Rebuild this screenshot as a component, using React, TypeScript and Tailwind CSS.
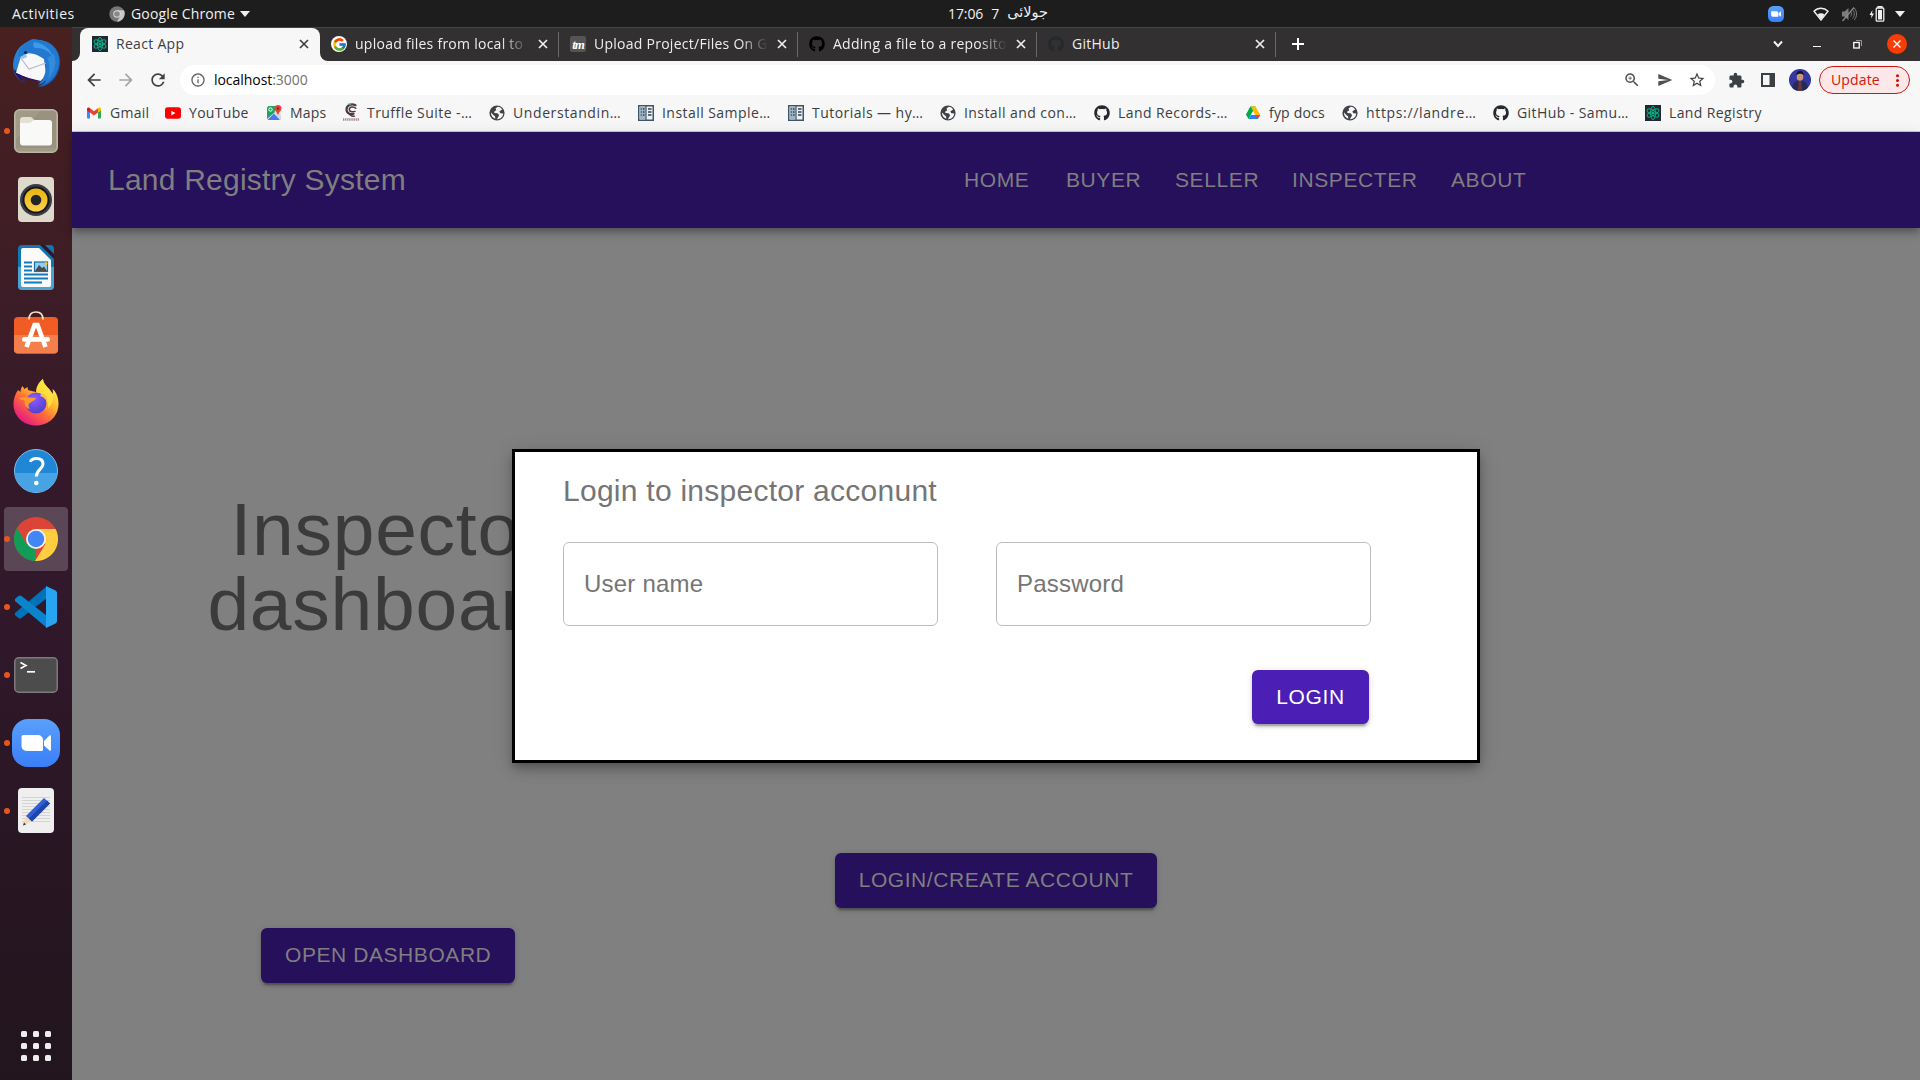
import React from "react";
import { FaGithub } from "react-icons/fa";
import {
  MdArrowBack,
  MdArrowForward,
  MdRefresh,
  MdInfoOutline,
  MdZoomIn,
  MdSend,
  MdStarBorder,
  MdExtension,
  MdMoreVert,
} from "react-icons/md";
import { FcGoogle } from "react-icons/fc";

const ui = "font-['Open_Sans','Noto_Sans',sans-serif]";

/* ---------- small favicons ---------- */

function ReactFavicon() {
  return (
    <svg viewBox="0 0 16 16" className="size-4 shrink-0">
      <rect width="16" height="16" fill="#232733" />
      <g fill="none" stroke="#06b184" strokeWidth="1">
        <ellipse cx="8" cy="8" rx="6.6" ry="2.5" transform="rotate(30 8 8)" />
        <ellipse cx="8" cy="8" rx="6.6" ry="2.5" transform="rotate(90 8 8)" />
        <ellipse cx="8" cy="8" rx="6.6" ry="2.5" transform="rotate(150 8 8)" />
      </g>
      <circle cx="8" cy="8" r="1.6" fill="#06b184" />
    </svg>
  );
}

function GmailIcon() {
  return (
    <svg viewBox="0 0 16 16" className="size-4 shrink-0">
      <path d="M1 4.5v8.2c0 .4.3.8.8.8H4V7.2z" fill="#4285f4" />
      <path d="M15 4.5v8.2c0 .4-.3.8-.8.8H12V7.2z" fill="#34a853" />
      <path d="M12 3.3v4.3l3-2.2V4c0-1.400-1.500-1.900-2.400-1.200z" fill="#fbbc04" />
      <path d="M4 7.600V3.300l4 3 4-3v4.300l-4 3z" fill="#ea4335" />
      <path d="M1 4v1.400l3 2.200V3.300l-.6-.5C2.500 2.100 1 2.600 1 4z" fill="#c5221f" />
    </svg>
  );
}

function YouTubeIcon() {
  return (
    <svg viewBox="0 0 16 16" className="size-4 shrink-0">
      <rect y="2.300" width="16" height="11.500" rx="2.800" fill="#f00" />
      <path d="M6.400 5.700v4.700l4-2.350z" fill="#fff" />
    </svg>
  );
}

function MapsIcon() {
  return (
    <svg viewBox="0 0 16 16" className="size-4 shrink-0">
      <path d="M2.500 1h9L15 5v9.500l-1 .5H2.500L1 13.500v-11z" fill="#e8eaed" />
      <path d="M2.500 1H10L8.500 7.500 1 14V2.500z" fill="#1ea362" />
      <path d="M1.500 15 8 8.500l6 6.500z" fill="#4a76f5" />
      <path d="M8 8.500 11 6l4 5v4z" fill="#d5d8dc" />
      <circle cx="4.500" cy="4.500" r="1.700" fill="none" stroke="#fff" />
      <path d="M12 0a3.500 3.500 0 0 1 3.500 3.500c0 2.400-2.700 3.300-3.500 7-.8-3.700-3.500-4.600-3.500-7A3.500 3.500 0 0 1 12 0z" fill="#ea4335" />
      <circle cx="12" cy="3.500" r="1.200" fill="#8c1d18" />
    </svg>
  );
}

function TruffleIcon() {
  return (
    <svg viewBox="0 0 16 19" className="h-[19px] w-4 shrink-0">
      <g fill="none" stroke="#4f3a42" strokeLinecap="round">
        <path d="M12.500 2.200C8 0 3.500 2.500 3.500 6.500c0 3.800 4 5.500 7 4.200" strokeWidth="2.200" />
        <path d="M12.800 5.200C10 2.800 6.200 4 6.300 6.600c.1 2 2.600 2.700 5.700 1.800" strokeWidth="1.500" />
        <path d="M6 10.500c1 2 3.600 3 5.600 2.600" strokeWidth="1.300" />
      </g>
      <path d="m4 1 3-1 1 2z" fill="#5fc9b5" />
      <path d="M0 16.500h16" stroke="#a58590" strokeWidth="2.500" strokeDasharray="1.300 .8" />
    </svg>
  );
}

function BookIcon() {
  return (
    <svg viewBox="0 0 16 16" className="size-4 shrink-0">
      <rect x=".75" y=".75" width="14.500" height="14.500" fill="#eef1f3" stroke="#3f5566" strokeWidth="1.500" />
      <rect x="1.500" y="1.500" width="6" height="13" fill="#9db4c4" />
      <path d="M8 1v14" stroke="#3f5566" strokeWidth="1.200" />
      <path d="M10 4h3.500M10 7h3.500M10 10h3.500" stroke="#30404d" strokeWidth="1.700" />
      <path d="M2.800 4h1M5 4h1.500M2.800 7h1M5 7h1.500M2.800 10h1M5 10h1.500" stroke="#30404d" strokeWidth="1.500" />
    </svg>
  );
}

function DriveIcon() {
  return (
    <svg viewBox="0 0 16 16" className="size-4 shrink-0">
      <path d="M5.500 1.500h5L8 6 3.500 14 1 9.800z" fill="#00ac47" />
      <path d="M5.500 1.500h5L15.200 10h-5z" fill="#ffba00" />
      <path d="M3.500 14 5.800 10h9.400l-2.500 4z" fill="#2684fc" />
      <path d="m10.200 10h5l-2.500 4z" fill="#ea4335" />
      <path d="M5.500 1.500 8 6 5.800 10H1z" fill="#00ac47" />
      <path d="M8 6.200 5.900 10h4.300z" fill="#f7f7f7" />
    </svg>
  );
}

function GlobeIcon() {
  return (
    <svg viewBox="0 0 16 16" className="size-4 shrink-0">
      <circle cx="8" cy="8" r="7.600" fill="#3f4246" />
      <path d="M8.800 1.800 6.500 3.500l.8 1.700-2 1.300v1.600l3.200.2 1.600 1.600-.6 1.700-1.600 2.600c3.500.2 6.200-2.400 6.300-5.600l-2.700-.4-1.300-1.500 1.700-1.500 1.300-.6C12.200 2.900 10.700 1.900 8.800 1.800z" fill="#f7f7f7" />
      <path d="M2 7.600c-.2 3 1.800 5.500 4.400 6.100L6 11.300 4.300 10z" fill="#f7f7f7" />
    </svg>
  );
}

function GithubIcon({ tone }: { tone: string }) {
  return <FaGithub className={`size-4 shrink-0 ${tone}`} />;
}

function TmIcon() {
  return (
    <div className="flex size-4 shrink-0 items-center justify-center rounded-xs bg-[#555] font-['Liberation_Serif',serif] text-[13px] leading-none font-bold tracking-[-1px] text-white italic">
      tm
    </div>
  );
}

function CloseX({ tone }: { tone: string }) {
  return (
    <svg viewBox="0 0 10 10" className={`size-[10px] shrink-0 ${tone}`}>
      <path d="m1 1 8 8M9 1 1 9" stroke="currentColor" strokeWidth="1.700" />
    </svg>
  );
}

/* ---------- desktop top bar ---------- */

function ZoomGlyph({ className }: { className: string }) {
  return (
    <svg viewBox="0 0 48 48" className={className}>
      <defs>
        <linearGradient id="zoomBlue" x1="0" y1="0" x2="0" y2="1">
          <stop offset="0" stopColor="#59a0fc" />
          <stop offset="1" stopColor="#3a7ef9" />
        </linearGradient>
      </defs>
      <rect width="48" height="48" rx="16" fill="url(#zoomBlue)" />
      <path d="M11 16h15a5 5 0 0 1 5 5v9.500a1.500 1.500 0 0 1-1.500 1.500h-15a5 5 0 0 1-5-5v-9.500A1.500 1.500 0 0 1 11 16z" fill="#fff" />
      <path d="m32 22 5.500-5.500a1 1 0 0 1 1.500.8v13.400a1 1 0 0 1-1.500.8L32 26.500z" fill="#fff" />
    </svg>
  );
}

function TopBar() {
  return (
    <header className={`flex h-[27px] shrink-0 items-center bg-[#1d1d1d] text-[14px] text-[#f0f0f0] ${ui}`}>
      <div className="ml-3 w-[97px] tracking-[0.5px]">Activities</div>
      <div className="flex w-[830px] items-center">
        <svg viewBox="0 0 16 16" className="size-4">
          <circle cx="8" cy="8" r="7.700" fill="#777" />
          <path d="M8 4.200h7c2 4-.5 11-7 11.500L11.300 10z" fill="#c8c8c8" />
          <circle cx="8" cy="8" r="3.700" fill="#ddd" />
          <circle cx="8" cy="8" r="2.800" fill="#888" />
        </svg>
        <span className="ml-[6px] w-[109px] whitespace-nowrap tracking-[0.15px]">Google Chrome</span>
        <svg viewBox="0 0 10 6" className="h-[6px] w-[10px]">
          <path d="M0 0h10L5 6z" fill="#f0f0f0" />
        </svg>
      </div>
      <div className="flex w-[829px] items-center gap-[8px] pl-[9px] pb-px" dir="ltr">
        <span className="tracking-[-0.1px]">17:06</span>
        <span>7</span>
        <span className="font-['DejaVu_Sans',sans-serif] text-[14.500px]" dir="rtl">جولائی</span>
      </div>
      <div className="flex items-center">
        <ZoomGlyph className="size-4" />
        <svg viewBox="0 0 16 14" className="ml-[29px] h-[14px] w-4">
          <path d="M1 4.200C5 .2 11 .2 15 4.200L8 13z" fill="none" stroke="#f0f0f0" strokeWidth="1.400" />
          <path d="M4.500 7.500c2-1.600 5-1.600 7 0L8 12.500z" fill="#f0f0f0" />
        </svg>
        <svg viewBox="0 0 16 16" className="ml-3 size-4">
          <path d="M1 5.500h2.500L7.500 2v12L3.500 10.500H1z" fill="#7c7c7c" />
          <path d="M9.500 5.500c1.300 1.300 1.300 3.700 0 5M11.500 3.500c2.400 2.400 2.400 6.600 0 9M13.300 2c3 3.500 3 8.500 0 12" fill="none" stroke="#7c7c7c" />
          <path d="M1.500 15 13 1.500" stroke="#8c8c8c" strokeWidth="1.200" />
        </svg>
        <svg viewBox="0 0 16 16" className="ml-3 size-4">
          <path d="M3.500 4 .5 9h2L2 12.500 5 7.500H3z" fill="#f0f0f0" />
          <path d="M9 1.800V.8h4v1" fill="none" stroke="#f0f0f0" strokeWidth="1.400" />
          <rect x="7.200" y="2" width="7.600" height="13.200" rx="1" fill="none" stroke="#f0f0f0" strokeWidth="1.300" />
          <rect x="9" y="4" width="4" height="9.500" fill="#f0f0f0" />
        </svg>
        <svg viewBox="0 0 10 6" className="ml-[10px] h-[6px] w-[10px]">
          <path d="M0 0h10L5 6z" fill="#f0f0f0" />
        </svg>
      </div>
    </header>
  );
}

/* ---------- dock ---------- */

function ThunderbirdIcon() {
  return (
    <svg viewBox="0 0 48 48" className="size-12">
      <defs>
        <linearGradient id="birdBlue" x1="0" y1="0" x2="1" y2="1">
          <stop offset="0" stopColor="#2f8fe0" />
          <stop offset=".6" stopColor="#1f6fc8" />
          <stop offset="1" stopColor="#1b3f9a" />
        </linearGradient>
      </defs>
      <path d="M4 14C0 22 0 32 5 38c3 3.500 6 5 8 5.500L6 33l28 9-8 6c12 0 22-11 22-25C48 10 38 1 26 1c-3-1-6-1-7 0-5 2-12 6-15 13z" fill="url(#birdBlue)" />
      <path d="M2 30c1 6 5 11 11 13.500L7 35z" fill="#27106b" />
      <path d="M4 34 9 17c6-5 15-3 23 3l2 15-5 8C21 41 12 38 4 34z" fill="#f8f8fa" />
      <path d="m8 18 9 12 17-6" fill="none" stroke="#b9b9c0" strokeWidth="1.200" />
      <path d="M4 34.500c8 4 16 6.500 25 8l1.500-2" fill="none" stroke="#27106b" strokeWidth="1.200" />
      <path d="M18 2c-7 2-12 8-12 15l3 2c3-4 10-7 16-5 6 2 10 7 9 15-.5 6-3 12-8 17 4-1 6-3 8-5-.5 2-1 4-3 5 9-3 16-12 16-23 0-4-1-8-3-11-5-8-15-13-26-11z" fill="#2378cf" />
      <path d="M22 3c9 1 17 7 19 15-4-6-10-9-16-9-3 0-5-2-3-6z" fill="#3d9be8" />
      <path d="M42 15c3 8 1 18-6 25 2-8 2-15-1-21z" fill="#3a93df" opacity=".7" />
      <path d="m8 18 6-3 1 3-4 2z" fill="#8fc8f4" />
      <circle cx="13.500" cy="13.500" r="1.600" fill="#0b2a5c" />
    </svg>
  );
}

function FilesIcon() {
  return (
    <svg viewBox="0 0 44 44" className="size-11">
      <rect x=".75" y=".75" width="42.500" height="42.500" rx="5" fill="#a19a86" stroke="#bcb6a5" strokeWidth="1.500" />
      <path d="M2 30 26 2h13a3 3 0 0 1 3 3v34H2z" fill="#8f8873" opacity=".4" />
      <path d="M6 20v-9a3 3 0 0 1 3-3h8l4 3.500V20z" fill="#e5e0d2" />
      <path d="M6 14h9c3 0 3-3 6-3h14a3 3 0 0 1 3 3v19.500a3 3 0 0 1-3 3H9a3 3 0 0 1-3-3z" fill="#f9f9f8" />
    </svg>
  );
}

function RhythmboxIcon() {
  return (
    <svg viewBox="0 0 36 45" className="h-[45px] w-9">
      <defs>
        <linearGradient id="speaker" x1="0" y1="0" x2="0" y2="1">
          <stop offset="0" stopColor="#e8b50c" />
          <stop offset="1" stopColor="#fbd04c" />
        </linearGradient>
      </defs>
      <rect width="36" height="45" rx="4" fill="#dedacb" />
      <circle cx="18" cy="23" r="16" fill="#3a3d48" />
      <circle cx="18" cy="23" r="13.500" fill="#15171c" />
      <circle cx="18" cy="23" r="11.500" fill="url(#speaker)" />
      <circle cx="18" cy="23" r="5.300" fill="#222428" />
    </svg>
  );
}

function WriterIcon() {
  return (
    <svg viewBox="0 0 36 45" className="h-[45px] w-9">
      <path d="M4 0h28a4 4 0 0 1 4 4v37a4 4 0 0 1-4 4H4a4 4 0 0 1-4-4V4a4 4 0 0 1 4-4z" fill="#1376ad" />
      <path d="M0 22h36v19a4 4 0 0 1-4 4H4a4 4 0 0 1-4-4z" fill="#4da3cf" />
      <path d="M22 0h5l9 9v5z" fill="#2b1a2e" />
      <path d="M5 3h16l12 12v25a2 2 0 0 1-2 2H5a2 2 0 0 1-2-2V5a2 2 0 0 1 2-2z" fill="#fafafa" />
      <path d="M6 17.500h8M6 21.500h8M6 25.500h8M6 29.500h24M6 33.500h24M6 37.500h18" stroke="#157bb8" strokeWidth="2" />
      <rect x="16.500" y="17" width="13" height="9.500" fill="#8bd0f5" stroke="#1a6fa3" strokeWidth="1.200" />
      <path d="m17 26 4-6 3 3 2-1.500 3 4.500z" fill="#4b4b4b" />
      <circle cx="28" cy="18.500" r="1.500" fill="#fbc02d" />
    </svg>
  );
}

function SoftwareIcon() {
  return (
    <svg viewBox="0 0 44 43" className="mb-[6px] h-[43px] w-11">
      <rect y="6" width="44" height="36.500" rx="4" fill="#f05c24" />
      <path d="M0 24h44v14.500a4 4 0 0 1-4 4H4a4 4 0 0 1-4-4z" fill="#f47f4c" />
      <path d="M15 8.500C15 3 18 1 22 1s7 2 7 7.500" fill="none" stroke="#fbe0bb" strokeWidth="1.700" />
      <path d="M12.500 36 20.500 14h3l8 22" fill="none" stroke="#fff" strokeWidth="4.600" />
      <rect x="8" y="26" width="28" height="4.800" rx="2.400" fill="#fff" />
    </svg>
  );
}

function FirefoxIcon() {
  return (
    <svg viewBox="0 0 46 47" className="mb-[2px] h-[47px] w-[46px]">
      <defs>
        <linearGradient id="foxBody" x1=".85" y1=".1" x2=".2" y2=".95">
          <stop offset="0" stopColor="#fff44f" />
          <stop offset=".35" stopColor="#ffb52e" />
          <stop offset=".6" stopColor="#ff6a3a" />
          <stop offset="1" stopColor="#e31587" />
        </linearGradient>
        <radialGradient id="foxGlobe" cx=".4" cy=".3" r=".8">
          <stop offset="0" stopColor="#9059ff" />
          <stop offset="1" stopColor="#4a3fc8" />
        </radialGradient>
      </defs>
      <path d="M30 0c-5 4-7 9-7 13-3-1-6-1-8-2l-.5-3-3 2L9.500 7c-1.500 2-2 4-2 6L5 11C2 15 .5 20 .5 25 .5 37 10 46.500 23 46.500S45.500 37 45.500 25c0-6-2-12-6-15 .5 2 .5 4 0 5C37 9 30 6 30 0z" fill="url(#foxBody)" />
      <path d="M30 0c-5 4-7 9-6 14 8 2 12 8 11 15 5-4 6-10 4.500-14C37 9 30 6 30 0z" fill="#ffe23f" opacity=".85" />
      <circle cx="23" cy="24" r="10.500" fill="url(#foxGlobe)" />
      <path d="M6 20c3-3 10-1 17-1-1 3-5 3.500-6 5-2 0-2 4 0 6-5-1-6-6-5-8-2-1-4-2-6-2z" fill="#ff9a2a" />
      <path d="M27 17c4 1 7 4 7 8 2-5-1-9-5-11z" fill="#ffbd4f" />
    </svg>
  );
}

function HelpIcon() {
  return (
    <svg viewBox="0 0 44 44" className="size-11">
      <circle cx="22" cy="22" r="21.500" fill="#1f87d6" stroke="#7fc0ee" />
      <path d="M.8 24h42.400a21.300 21.300 0 0 1-42.400 0z" fill="#47a3e3" />
      <path d="M16.500 13C17 10.500 19 9.600 22.500 9.600c4 0 6.500 2 6.500 5.400 0 5-6.700 5.500-6.700 12.500" fill="none" stroke="#fff" strokeWidth="3" />
      <circle cx="22.300" cy="34" r="2.300" fill="#fff" />
    </svg>
  );
}

function ChromeIcon() {
  return (
    <svg viewBox="0 0 44 44" className="size-11">
      <circle cx="22" cy="22" r="22" fill="#db4437" />
      <path d="M3 11 12.500 27 22 33l-1 11A22 22 0 0 1 3 11z" fill="#0f9d58" />
      <path d="M22 12h19.600A22 22 0 0 1 21 44l10.500-17z" fill="#ffcd40" />
      <circle cx="22" cy="22" r="10" fill="#f1f1f1" />
      <circle cx="22" cy="22" r="8.200" fill="#4285f4" />
    </svg>
  );
}

function VsCodeIcon() {
  return (
    <svg viewBox="0 0 42 42" className="size-[42px]">
      <path d="M.5 26.500c-1 1-1 2 0 3L3.500 32c1 .8 2 .7 3 0L32 12V0z" fill="#0072b8" />
      <path d="M.5 15.500c-1-1-1-2 0-3L3.500 10c1-.8 2-.7 3 0L32 30v12z" fill="#0a84cc" />
      <path d="M31 0 40 4.200c1.300.6 2 1.500 2 3V34.800c0 1.500-.7 2.400-2 3L31 42z" fill="#27a5f2" />
    </svg>
  );
}

function TerminalIcon() {
  return (
    <svg viewBox="0 0 44 36" className="h-9 w-11">
      <rect x=".75" y=".75" width="42.500" height="34.500" rx="4" fill="#4c4c4c" stroke="#7b7b7b" strokeWidth="1.500" />
      <path d="m6.500 5.500 5.500 3-5.500 3" fill="none" stroke="#fff" strokeWidth="1.600" />
      <path d="M13 14.800h8" stroke="#fff" strokeWidth="1.700" />
    </svg>
  );
}

function EditorIcon() {
  return (
    <svg viewBox="0 0 36 45" className="mb-px h-[45px] w-9">
      <rect width="36" height="45" rx="4" fill="#efefef" />
      <path d="M4 9.500h28M4 12.500h28M4 15.500h28M4 18.500h28M4 21.500h28M4 24.500h28M4 27.500h28M4 30.500h28M4 33.500h28" stroke="#cfcfcf" strokeWidth=".9" />
      <path d="m5 37.500 3-9.500 5.500 5.500z" fill="#f3d9b4" />
      <path d="m5 37.500 1-3 2 2z" fill="#333" />
      <path d="M8 28 26 10l6 5.500-18 18z" fill="#2f5fd0" />
      <path d="m11 30.500 18-18 3 3-18 18z" fill="#1d45ab" />
    </svg>
  );
}

const dock = [
  { id: "mail", icon: <ThunderbirdIcon />, running: false, active: false },
  { id: "files", icon: <FilesIcon />, running: true, active: false },
  { id: "music", icon: <RhythmboxIcon />, running: false, active: false },
  { id: "writer", icon: <WriterIcon />, running: false, active: false },
  { id: "software", icon: <SoftwareIcon />, running: false, active: false },
  { id: "firefox", icon: <FirefoxIcon />, running: false, active: false },
  { id: "help", icon: <HelpIcon />, running: false, active: false },
  { id: "chrome", icon: <ChromeIcon />, running: true, active: true },
  { id: "code", icon: <VsCodeIcon />, running: true, active: false },
  { id: "terminal", icon: <TerminalIcon />, running: true, active: false },
  { id: "zoom", icon: <ZoomGlyph className="size-12" />, running: true, active: false },
  { id: "editor", icon: <EditorIcon />, running: true, active: false },
];

function Dock() {
  return (
    <aside className="flex w-[72px] shrink-0 flex-col bg-linear-to-b from-[#48201f] via-[#32182c] to-[#22151d] pt-[2px]">
      {dock.map((d) => (
        <div key={d.id} className="flex h-[68px] items-center justify-center">
          <div
            className={`relative flex size-16 items-center justify-center rounded-sm ${d.active ? "bg-white/20" : ""}`}
          >
            {d.running && <span className="absolute top-[29px] left-0 size-[6px] rounded-full bg-[#e95420]" />}
            {d.icon}
          </div>
        </div>
      ))}
      <div className="mt-auto mb-[19px] grid grid-cols-3 gap-[6px] self-center">
        {Array.from({ length: 9 }, (_, i) => (
          <span key={i} className="size-[6px] rounded-[1.5px] bg-[#eeeeec]" />
        ))}
      </div>
    </aside>
  );
}

/* ---------- browser chrome ---------- */

const tabs = [
  { title: "upload files from local to r", icon: <FcGoogle className="size-[15px]" />, badge: true, fade: true },
  { title: "Upload Project/Files On Gi", icon: <TmIcon />, badge: false, fade: true },
  { title: "Adding a file to a repository", icon: <GithubIcon tone="text-black" />, badge: false, fade: true },
  { title: "GitHub", icon: <GithubIcon tone="text-[#24292e]" />, badge: false, fade: false },
];

function TabStrip() {
  return (
    <div className="flex h-[34px] shrink-0 items-stretch border-t border-[#454343] bg-[#323031] text-[14px] text-[#eeeeee]">
      <div className="w-2 bg-[#f7f7f7]">
        <div className="size-full rounded-br-lg bg-[#323031]" />
      </div>
      <div className="flex w-60 items-center rounded-t-lg bg-[#f7f7f7] pr-[11px] pb-px pl-3 text-[#3c4043]">
        <ReactFavicon />
        <span className="ml-2 flex-1 pb-px tracking-[0.3px]">React App</span>
        <CloseX tone="text-[#3c4043]" />
      </div>
      <div className="flex bg-[#f7f7f7]">
        <div className="flex rounded-bl-lg bg-[#323031]">
          {tabs.map((t) => (
            <div key={t.title} className="flex w-[239px] items-center pb-px pl-[11px]">
              <span className={`flex size-4 items-center justify-center rounded-full ${t.badge ? "bg-white" : ""}`}>
                {t.icon}
              </span>
              <span
                className={`ml-2 w-[174px] overflow-hidden pb-px whitespace-nowrap tracking-[0.26px] ${
                  t.fade ? "[mask-image:linear-gradient(to_right,#000_84%,transparent)]" : ""
                }`}
              >
                {t.title}
              </span>
              <span className="ml-[9px]">
                <CloseX tone="text-[#eeeeee]" />
              </span>
              <span className="ml-auto h-[25px] w-px bg-[#6a6869]" />
            </div>
          ))}
        </div>
      </div>
      <div className="flex flex-1 items-center pb-px pl-[16px]">
        <svg viewBox="0 0 12 12" className="size-3">
          <path d="M6 0v12M0 6h12" stroke="#fff" strokeWidth="2" />
        </svg>
        <svg viewBox="0 0 10 8" className="ml-auto h-2 w-[10px]">
          <path d="m1 1.500 4 4.500 4-4.500" fill="none" stroke="#f5f5f5" strokeWidth="2" />
        </svg>
        <span className="mt-[5px] ml-[30px] h-px w-2 bg-white" />
        <svg viewBox="0 0 9 9" className="ml-8 size-[9px]">
          <path d="M3 .5h5.500V6" fill="none" stroke="#9a9a9a" />
          <rect x=".75" y="2.500" width="5.500" height="5.500" fill="none" stroke="#fff" strokeWidth="1.300" />
        </svg>
        <span className="mr-[13px] ml-[25px] flex size-5 items-center justify-center rounded-full bg-[#f93c05]">
          <svg viewBox="0 0 8 8" className="size-2">
            <path d="m.5.500 7 7M7.500.500l-7 7" stroke="#fff" strokeWidth="1.300" />
          </svg>
        </span>
      </div>
    </div>
  );
}

function Avatar() {
  return (
    <svg viewBox="0 0 22 22" className="size-[22px]">
      <defs>
        <clipPath id="round">
          <circle cx="11" cy="11" r="11" />
        </clipPath>
      </defs>
      <g clipPath="url(#round)">
        <rect width="22" height="22" fill="#34379f" />
        <path d="M3 22c0-8 3-10.500 8-10.500s8 2.500 8 10.500z" fill="#262b55" />
        <path d="M9.500 12h3l.6 10H9z" fill="#6b3340" />
        <ellipse cx="11" cy="7.500" rx="3.300" ry="4.300" fill="#c79580" />
        <path d="M7.300 6.500c-.5-6 8-6 7.400 0-1-2.200-6-2.200-7.400 0z" fill="#17131c" />
      </g>
    </svg>
  );
}

function AddressBar() {
  return (
    <div className="flex h-[38px] shrink-0 items-center pl-3 text-[#3c4043]">
      <MdArrowBack className="size-5" />
      <MdArrowForward className="ml-3 size-5 text-[#a3a5a7]" />
      <MdRefresh className="ml-3 size-5" />
      <div className="ml-3 flex h-[30px] w-[1535px] items-center rounded-full bg-white pl-[10px] text-[14px]">
        <MdInfoOutline className="size-4 text-[#5f6368]" />
        <span className="ml-2 flex-1 pb-0.5 tracking-[-0.05px] text-black">
          localhost<span className="text-[#707376]">:3000</span>
        </span>
        <MdZoomIn className="size-[18px] text-[#4c5054]" />
        <MdSend className="ml-[16px] size-4 text-[#4c5054]" />
        <MdStarBorder className="mr-[9px] ml-[15px] size-[18px] text-[#3c4043]" />
      </div>
      <MdExtension className="ml-[13px] size-[17px]" />
      <svg viewBox="0 0 14 14" className="ml-[16px] size-[14px]">
        <path d="M0 0h14v14H0zM2 2v10h6.500V2z" fillRule="evenodd" fill="#3c4043" />
      </svg>
      <span className="ml-[14px]">
        <Avatar />
      </span>
      <div className="ml-2 flex h-7 w-[91px] items-center rounded-full border border-[#d0160c] bg-[#fce8e8] pl-[11px] text-[14px] text-[#d0160c]">
        <span className="w-[57px] pb-0.5 tracking-[0.15px]">Update</span>
        <MdMoreVert className="size-[19px]" />
      </div>
    </div>
  );
}

const bookmarks = [
  { label: "Gmail", icon: <GmailIcon />, fit: "w-[55px] tracking-[0.25px]" },
  { label: "YouTube", icon: <YouTubeIcon />, fit: "w-[77px] tracking-[0.3px]" },
  { label: "Maps", icon: <MapsIcon />, fit: "w-[53px] tracking-[0.15px]" },
  { label: "Truffle Suite -…", icon: <TruffleIcon />, fit: "w-[122px] tracking-[0.45px]" },
  { label: "Understandin…", icon: <GlobeIcon />, fit: "w-[125px] tracking-[0.6px]" },
  { label: "Install Sample…", icon: <BookIcon />, fit: "w-[126px] tracking-[0.45px]" },
  { label: "Tutorials — hy…", icon: <BookIcon />, fit: "w-[128px] tracking-[0.45px]" },
  { label: "Install and con…", icon: <GlobeIcon />, fit: "w-[130px] tracking-[0.42px]" },
  { label: "Land Records-…", icon: <GithubIcon tone="text-[#24292e]" />, fit: "w-[127px] tracking-[0.42px]" },
  { label: "fyp docs", icon: <DriveIcon />, fit: "w-[73px] tracking-[0.2px]" },
  { label: "https://landre…", icon: <GlobeIcon />, fit: "w-[127px] tracking-[0.65px]" },
  { label: "GitHub - Samu…", icon: <GithubIcon tone="text-[#24292e]" />, fit: "w-[128px] tracking-[0.42px]" },
  { label: "Land Registry", icon: <ReactFavicon />, fit: "w-[100px] tracking-[0.38px]" },
];

function Bookmarks() {
  return (
    <div className="flex h-[33px] shrink-0 items-center border-b border-[#c9c9cc] pb-[5px] pl-[14px] text-[14px] text-[#3c4043]">
      {bookmarks.map((b) => (
        <div key={b.label} className="flex items-center">
          {b.icon}
          <span className={`ml-2 pb-px whitespace-nowrap ${b.fit}`}>{b.label}</span>
        </div>
      ))}
    </div>
  );
}

/* ---------- web page ---------- */

const buttonShadow =
  "shadow-[0_4.5px_1.5px_-3px_rgba(0,0,0,0.2),0_3px_3px_rgba(0,0,0,0.14),0_1.5px_7.5px_rgba(0,0,0,0.12)]";

const nav = [
  { label: "HOME", width: "w-[102px]" },
  { label: "BUYER", width: "w-[109px]" },
  { label: "SELLER", width: "w-[117px]" },
  { label: "INSPECTER", width: "w-[159px]" },
  { label: "ABOUT", width: "w-[80px]" },
];

function DimButton({ children }: { children: string }) {
  return (
    <button
      className={`h-[55px] rounded-md bg-[#260f5b] px-6 pb-[2px] text-[21px] tracking-[0.57px] whitespace-nowrap text-[#7f7f7f] ${buttonShadow}`}
    >
      {children}
    </button>
  );
}

function Field({ label }: { label: string }) {
  return (
    <div className="flex h-[84px] w-[375px] items-center rounded-md border border-[#bdbdbd] pl-5 text-[24px] tracking-[0.22px] text-[#757575]">
      {label}
    </div>
  );
}

function LoginDialog() {
  return (
    <div className="absolute top-[317px] left-[440px] h-[314px] w-[968px] border-[3px] border-black bg-white pt-[15px] pl-12 shadow-[0_4.5px_7.5px_-1.5px_rgba(0,0,0,0.2),0_7.5px_12px_rgba(0,0,0,0.14),0_1.5px_21px_rgba(0,0,0,0.12)]">
      <h2 className="h-12 text-[30px] leading-[48px] tracking-[0.26px] text-[#757575]">Login to inspector acconunt</h2>
      <div className="mt-[27px] flex gap-[58px]">
        <Field label="User name" />
        <Field label="Password" />
      </div>
      <div className="mt-[44px] flex w-[806px] justify-end">
        <button
          className={`h-[54px] w-[117px] rounded-md bg-[#4b1eb5] text-[21px] tracking-[0.6px] text-white ${buttonShadow}`}
        >
          LOGIN
        </button>
      </div>
    </div>
  );
}

function Page() {
  return (
    <main className="relative flex-1 bg-[#808080] font-['Liberation_Sans',Arial,sans-serif]">
      <div className="flex h-24 items-center bg-[#260f5b] pl-9 text-[#7f7f7f] shadow-[0_3px_6px_-1.5px_rgba(0,0,0,0.2),0_6px_7.5px_rgba(0,0,0,0.14),0_1.5px_15px_rgba(0,0,0,0.12)]">
        <div className="w-[856px] pb-[2px] text-[30px] tracking-[0.225px]">Land Registry System</div>
        <nav className="flex text-[21px] tracking-[0.6px]">
          {nav.map((n) => (
            <span key={n.label} className={n.width}>
              {n.label}
            </span>
          ))}
        </nav>
      </div>
      <h1 className="mt-[264px] ml-[116px] w-[400px] text-center text-[75px] leading-[75px] tracking-[0.75px] text-[#3b3b3b]">
        Inspector dashboard
      </h1>
      <div className="mt-[211px] flex justify-center">
        <DimButton>LOGIN/CREATE ACCOUNT</DimButton>
      </div>
      <div className="mt-5 pl-[189px]">
        <DimButton>OPEN DASHBOARD</DimButton>
      </div>
      <LoginDialog />
    </main>
  );
}

export default function App() {
  return (
    <div className="flex h-[1080px] w-[1920px] flex-col overflow-hidden">
      <TopBar />
      <div className="flex min-h-0 flex-1">
        <Dock />
        <div className="flex min-w-0 flex-1 flex-col">
          <div className={`flex shrink-0 flex-col bg-[#f7f7f7] ${ui}`}>
            <TabStrip />
            <AddressBar />
            <Bookmarks />
          </div>
          <Page />
        </div>
      </div>
    </div>
  );
}
